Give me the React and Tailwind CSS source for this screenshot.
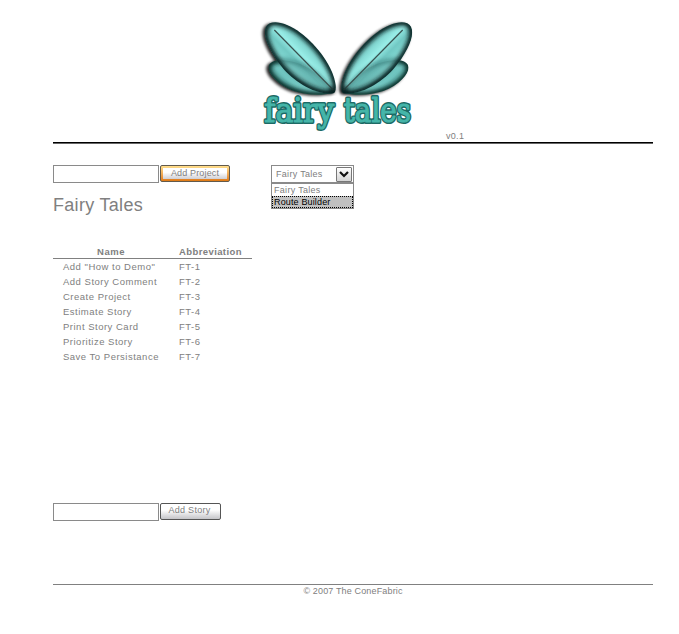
const stories = [
  'Add "How to Demo"',
  'Add Story Comment',
  'Create Project',
  'Estimate Story',
  'Print Story Card',
  'Prioritize Story',
  'Save To Persistance',
];

const BIG = 'M251 250 C206 256 142 224 100 176 C60 128 35 78 48 50 C62 26 108 36 151 68 C204 108 250 172 257 225 C258 240 256 247 251 250 Z';
const SMALL = 'M250 249 C190 263 114 250 74 207 C46 178 50 154 86 151 C150 147 214 190 250 249 Z';

function Wing() {
  return (
    <g>
      <g clipPath="url(#smallClip)">
        <path d={SMALL} fill="url(#teal)" />
        <path d={SMALL} fill="none" stroke="#06201f" strokeWidth="17" filter="url(#edge)" />
      </g>
      <path d={BIG} fill="#123f3e" opacity=".3" filter="url(#edge)" clipPath="url(#smallClip)" />
      <g clipPath="url(#bigClip)">
        <path d={BIG} fill="url(#teal)" />
        <path d={SMALL} fill="#123f3e" opacity=".14" />
        <path d={SMALL} fill="none" stroke="#0c3534" strokeWidth="9" opacity=".5" filter="url(#edge)" />
        <path d={BIG} fill="none" stroke="#031413" strokeWidth="19" filter="url(#edge)" />
      </g>
      <path d="M73 60 L250 240" stroke="#39514f" strokeWidth="3.5" />
      <circle cx="247" cy="240" r="9" fill="#04110f" opacity=".7" filter="url(#edge)" />
    </g>
  );
}

function Shadow() {
  return (
    <g fill="#000" opacity=".85" filter="url(#soft)">
      <path d={SMALL} />
      <path d={BIG} />
    </g>
  );
}

function Lettering(props) {
  return (
    <g {...props}>
      <text x="43" y="336" textLength="210" lengthAdjust="spacingAndGlyphs">fairy</text>
      <text x="281" y="336" textLength="202" lengthAdjust="spacingAndGlyphs">tales</text>
    </g>
  );
}

function Logo() {
  return (
    <svg className="ml-[250px] h-[132px] w-[180px] shrink-0" viewBox="0 0 540 396">
      <defs>
        <filter id="soft" x="-20%" y="-20%" width="140%" height="140%"><feGaussianBlur stdDeviation="4.5" /></filter>
        <filter id="edge" x="-40%" y="-40%" width="180%" height="180%"><feGaussianBlur stdDeviation="7" /></filter>
        <linearGradient id="teal" gradientUnits="userSpaceOnUse" x1="95" y1="200" x2="195" y2="100">
          <stop offset="0" stopColor="#68beb9" />
          <stop offset=".22" stopColor="#86ded8" />
          <stop offset=".46" stopColor="#72c9c4" />
          <stop offset=".64" stopColor="#98ede7" />
          <stop offset="1" stopColor="#66bcb7" />
        </linearGradient>
        <clipPath id="smallClip"><path d={SMALL} /></clipPath>
        <clipPath id="bigClip"><path d={BIG} /></clipPath>
      </defs>
      <g transform="translate(-7 3)"><Shadow /></g>
      <Wing />
      <g transform="translate(525 3) scale(-1 1)"><Shadow /></g>
      <g transform="translate(531 0) scale(-1 1)"><Wing /></g>
      <g fontFamily="'DejaVu Serif', serif" fontSize="101" strokeLinejoin="round">
        <Lettering fill="#1d6964" stroke="#1d6964" strokeWidth="12" />
        <Lettering fill="#45b5a9" stroke="#45b5a9" strokeWidth="3.5" />
      </g>
    </svg>
  );
}

export default function App() {
  return (
    <div className="flex h-[634px] w-[679px] flex-col overflow-hidden bg-white pt-[10px] font-['Liberation_Sans',Arial,sans-serif] text-[9px] leading-[15px] text-[#808080]">
      <header className="flex h-[132px] shrink-0 items-end">
        <Logo />
        <span className="ml-[16px] leading-[11px] tracking-[0.3px]">v0.1</span>
      </header>
      <div className="ml-[53px] h-[2px] w-[600px] shrink-0 border-b border-[#666] bg-black" />

      <div className="mt-[21px] ml-[53px] flex h-[44px] shrink-0 items-start">
        <input className="h-[18px] w-[106px] border border-[#8a8a8a] bg-white outline-none" />
        <button className="ml-[1px] h-[17px] w-[70px] rounded-[2px] border border-[#625a4c] bg-linear-to-b from-[#ffdf8c] to-[#e07a10] p-[2px]">
          <span className="block h-[11px] bg-linear-to-b from-white from-40% to-[#cfcfd4] text-[9px] leading-[11px] tracking-[0.15px] whitespace-nowrap">Add Project</span>
        </button>
        <div className="ml-[41px] w-[83px]">
          <div className="flex h-[18px] items-center justify-between border border-[#8a8a8a] pr-px pl-[4px]">
            <span className="tracking-[0.3px]">Fairy Tales</span>
            <span className="flex h-[15px] w-[16px] items-center justify-center rounded-[1px] border border-[#777] bg-linear-to-b from-white to-[#d4d4d4]">
              <svg className="h-[7px] w-[10px]" viewBox="0 0 10 7"><path d="M1 1 L5 5 L9 1" fill="none" stroke="#111" strokeWidth="2.2" /></svg>
            </span>
          </div>
          <ul className="border border-[#8a8a8a] leading-[12px]">
            <li className="h-[12px] pl-[2px] tracking-[0.3px]">Fairy Tales</li>
            <li className="h-[12px] border border-dotted border-black bg-[#c0c0c0] pl-[1px] leading-[10px] tracking-[0.15px] text-black">Route Builder</li>
          </ul>
        </div>
      </div>

      <h1 className="mt-[-15px] ml-[53px] h-[22px] shrink-0 text-[18px] leading-[22px] tracking-[0.3px]">Fairy Tales</h1>

      <table className="mt-[27px] ml-[53px] w-[199px] shrink-0 border-collapse text-[9.5px] tracking-[0.5px]">
        <thead>
          <tr className="h-[15px] border-b border-[#808080]">
            <th className="w-[116px] p-0 pt-[2px] font-bold leading-[13px]">Name</th>
            <th className="p-0 pt-[2px] pl-[10px] text-left font-bold leading-[13px] tracking-[0.4px]">Abbreviation</th>
          </tr>
        </thead>
        <tbody>
          {stories.map((name, i) => (
            <tr key={name} className="h-[15px]">
              <td className="p-0 pl-[10px] whitespace-nowrap">{name}</td>
              <td className="p-0 pl-[10px]">FT-{i + 1}</td>
            </tr>
          ))}
        </tbody>
      </table>

      <div className="mt-auto ml-[53px] flex h-[81px] shrink-0 items-start">
        <input className="h-[18px] w-[106px] border border-[#8a8a8a] bg-white outline-none" />
        <button className="ml-[1px] h-[17px] w-[61px] rounded-[2px] border border-[#555] bg-linear-to-b from-white from-40% to-[#c4c4c8] pr-[2px] pb-[2px] text-[9px] leading-[13px] tracking-[0.25px]">Add Story</button>
      </div>
      <footer className="ml-[53px] h-[50px] w-[600px] shrink-0 border-t border-[#808080] text-center leading-[12px] tracking-[0.15px]">© 2007 The ConeFabric</footer>
    </div>
  );
}
